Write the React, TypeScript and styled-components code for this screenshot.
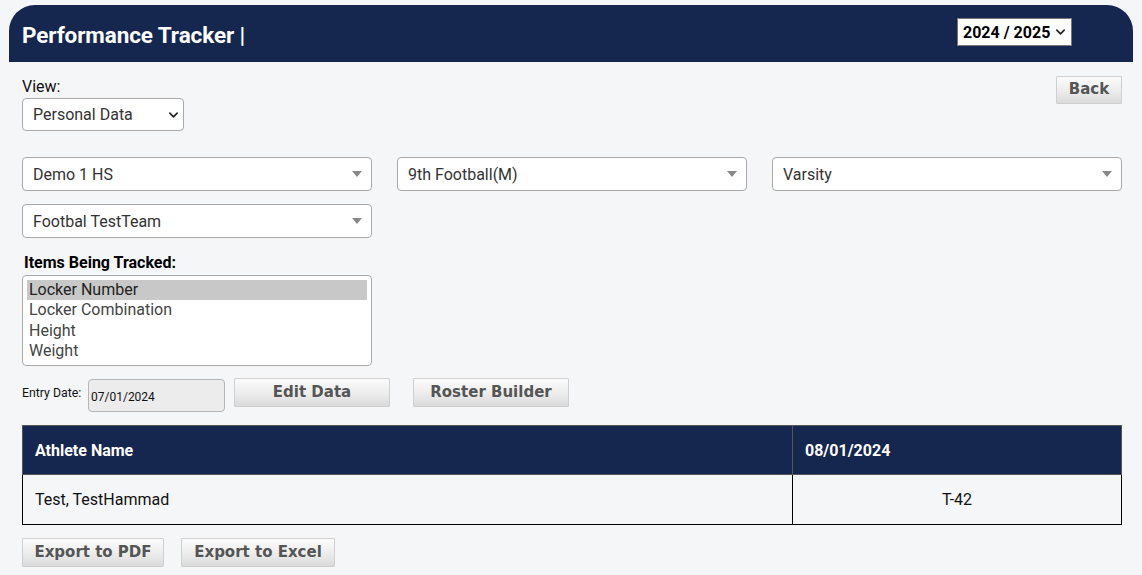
import React from "react";
import styled, { createGlobalStyle } from "styled-components";

const GlobalStyle = createGlobalStyle`
  html, body { margin: 0; padding: 0; }
  body {
    background: #f5f6f8;
    font-family: Roboto, "Liberation Sans", Arial, sans-serif;
    color: #222;
  }
`;

const NAVY = "#15264f";

const Page = styled.div`
  padding: 5px 9px 0 9px;
`;

const Header = styled.header`
  height: 57px;
  background: ${NAVY};
  border-radius: 26px 26px 0 0;
  display: flex;
  align-items: center;
  justify-content: space-between;
  padding: 0 61px 0 13px;
  box-sizing: border-box;
`;

const Title = styled.h1`
  margin: 0;
  color: #fff;
  font-family: Roboto, sans-serif;
  font-weight: 700;
  font-size: 22.5px;
  letter-spacing: -0.1px;
  padding-top: 2px;
`;

const YearWrap = styled.div`
  position: relative;
  margin-top: -3px;
`;

const YearSelect = styled.select`
  appearance: none;
  -webkit-appearance: none;
  width: 115px;
  height: 28px;
  background: #fff;
  border: 1px solid #767676;
  border-radius: 0;
  font-family: Roboto, sans-serif;
  font-weight: 700;
  font-size: 16px;
  color: #000;
  padding: 0 0 0 5px;
  outline: none;
`;

const Content = styled.main`
  padding: 0 11px 0 13px;
`;

const TopRow = styled.div`
  display: flex;
  justify-content: space-between;
  align-items: flex-start;
  padding-top: 16px;
`;

const ViewBlock = styled.div`
  display: flex;
  flex-direction: column;
  gap: 2px;
`;

const ViewLabel = styled.label`
  font-size: 16px;
  line-height: 18px;
  color: #111;
`;

const SelectWrap = styled.div`
  position: relative;
  width: ${(p: { $w?: string }) => p.$w || "100%"};
`;

const BaseSelect = styled.select<{ $h?: number }>`
  appearance: none;
  -webkit-appearance: none;
  width: 100%;
  height: ${(p) => p.$h || 34}px;
  box-sizing: border-box;
  background: #fff;
  border: 1px solid #a9a9a9;
  border-radius: 4px;
  font-family: Roboto, sans-serif;
  font-size: 16px;
  color: #333;
  padding: 0 28px 0 10px;
  outline: none;
`;

const Caret = styled.span`
  position: absolute;
  right: 10px;
  top: 50%;
  transform: translateY(-50%);
  width: 0;
  height: 0;
  border-left: 5px solid transparent;
  border-right: 5px solid transparent;
  border-top: 6px solid #888;
  pointer-events: none;
`;

const Chevron = styled.svg<{ $right: number }>`
  position: absolute;
  right: ${(p) => p.$right}px;
  top: 50%;
  transform: translateY(-50%);
  pointer-events: none;
`;

const Button = styled.button<{ $w: number }>`
  width: ${(p) => p.$w}px;
  height: 29px;
  box-sizing: border-box;
  border: 1px solid #cfcfcf;
  border-radius: 1px;
  background: linear-gradient(to bottom, #fbfbfb 0%, #ececec 55%, #dadada 100%);
  font-family: "DejaVu Sans", Verdana, sans-serif;
  font-weight: 700;
  font-size: 15px;
  color: #555;
  padding: 0 0 2px 0;
  cursor: pointer;
`;

const BackButton = styled(Button)`
  height: 28px;
  margin-top: -2px;
`;

const SelectGrid = styled.div`
  display: grid;
  grid-template-columns: repeat(3, 1fr);
  column-gap: 25px;
  row-gap: 13px;
  margin-top: 26px;
`;

const TrackedLabel = styled.div`
  font-weight: 700;
  font-size: 16px;
  margin: 16px 0 0 2px;
  line-height: 17px;
  color: #000;
`;

const ListBox = styled.div`
  margin-top: 4px;
  width: 350px;
  height: 91px;
  box-sizing: border-box;
  background: #fff;
  border: 1px solid #a9a9a9;
  border-radius: 4px;
  padding: 4px 4px;
`;

const ListItem = styled.div<{ $selected?: boolean }>`
  font-size: 16px;
  line-height: 20.3px;
  padding-left: 2px;
  color: ${(p) => (p.$selected ? "#222" : "#444")};
  background: ${(p) => (p.$selected ? "#c8c8c8" : "transparent")};
`;

const EntryRow = styled.div`
  display: flex;
  align-items: flex-start;
  margin-top: 12px;
`;

const EntryLabel = styled.label`
  font-size: 12.3px;
  color: #111;
  margin-top: 8px;
  width: 66px;
`;

const DateInput = styled.input`
  width: 137px;
  height: 33px;
  box-sizing: border-box;
  margin-top: 1px;
  background: #ececed;
  border: 1px solid #b5b5b5;
  border-radius: 4px;
  font-family: Roboto, sans-serif;
  font-size: 12px;
  color: #111;
  padding: 2px 0 0 2px;
  outline: none;
`;

const EntryButtons = styled.div`
  display: flex;
  gap: 23px;
  margin-left: 9px;
`;

const Table = styled.table`
  margin-top: 13px;
  width: 1100px;
  border-collapse: collapse;
`;

const Th = styled.th<{ $w?: number }>`
  background: ${NAVY};
  color: #fff;
  font-weight: 700;
  font-size: 16px;
  text-align: left;
  height: 49px;
  padding: 0 12px;
  border: 1px solid #555;
  width: ${(p) => (p.$w ? `${p.$w}px` : "auto")};
  box-sizing: border-box;
`;

const Td = styled.td<{ $center?: boolean }>`
  height: 50px;
  font-size: 16px;
  color: #111;
  padding: 0 12px;
  border: 1px solid #000;
  text-align: ${(p) => (p.$center ? "center" : "left")};
  box-sizing: border-box;
`;

const ExportRow = styled.div`
  display: flex;
  gap: 17px;
  margin-top: 13px;
`;

const ChevronIcon = ({ right, size = 11 }: { right: number; size?: number }) => (
  <Chevron $right={right} width={size} height={size} viewBox="0 0 12 12">
    <path d="M2 4 L6 8 L10 4" fill="none" stroke="#222" strokeWidth="1.8" strokeLinecap="round" strokeLinejoin="round" />
  </Chevron>
);

const Dropdown = ({ value }: { value: string }) => (
  <SelectWrap>
    <BaseSelect defaultValue={value}>
      <option>{value}</option>
    </BaseSelect>
    <Caret />
  </SelectWrap>
);

export default function App() {
  return (
    <>
      <GlobalStyle />
      <Page>
        <Header>
          <Title>Performance Tracker |</Title>
          <YearWrap>
            <YearSelect defaultValue="2024 / 2025">
              <option>2024 / 2025</option>
            </YearSelect>
            <ChevronIcon right={6} size={11} />
          </YearWrap>
        </Header>
        <Content>
          <TopRow>
            <ViewBlock>
              <ViewLabel>View:</ViewLabel>
              <SelectWrap $w="162px">
                <BaseSelect $h={33} defaultValue="Personal Data">
                  <option>Personal Data</option>
                </BaseSelect>
                <ChevronIcon right={5} size={11} />
              </SelectWrap>
            </ViewBlock>
            <BackButton $w={66}>Back</BackButton>
          </TopRow>

          <SelectGrid>
            <Dropdown value="Demo 1 HS" />
            <Dropdown value="9th Football(M)" />
            <Dropdown value="Varsity" />
            <Dropdown value="Footbal TestTeam" />
          </SelectGrid>

          <TrackedLabel>Items Being Tracked:</TrackedLabel>
          <ListBox>
            <ListItem $selected>Locker Number</ListItem>
            <ListItem>Locker Combination</ListItem>
            <ListItem>Height</ListItem>
            <ListItem>Weight</ListItem>
          </ListBox>

          <EntryRow>
            <EntryLabel>Entry Date:</EntryLabel>
            <DateInput defaultValue="07/01/2024" />
            <EntryButtons>
              <Button $w={156}>Edit Data</Button>
              <Button $w={156}>Roster Builder</Button>
            </EntryButtons>
          </EntryRow>

          <Table>
            <thead>
              <tr>
                <Th $w={770}>Athlete Name</Th>
                <Th>08/01/2024</Th>
              </tr>
            </thead>
            <tbody>
              <tr>
                <Td>Test, TestHammad</Td>
                <Td $center>T-42</Td>
              </tr>
            </tbody>
          </Table>

          <ExportRow>
            <Button $w={142}>Export to PDF</Button>
            <Button $w={154}>Export to Excel</Button>
          </ExportRow>
        </Content>
      </Page>
    </>
  );
}
